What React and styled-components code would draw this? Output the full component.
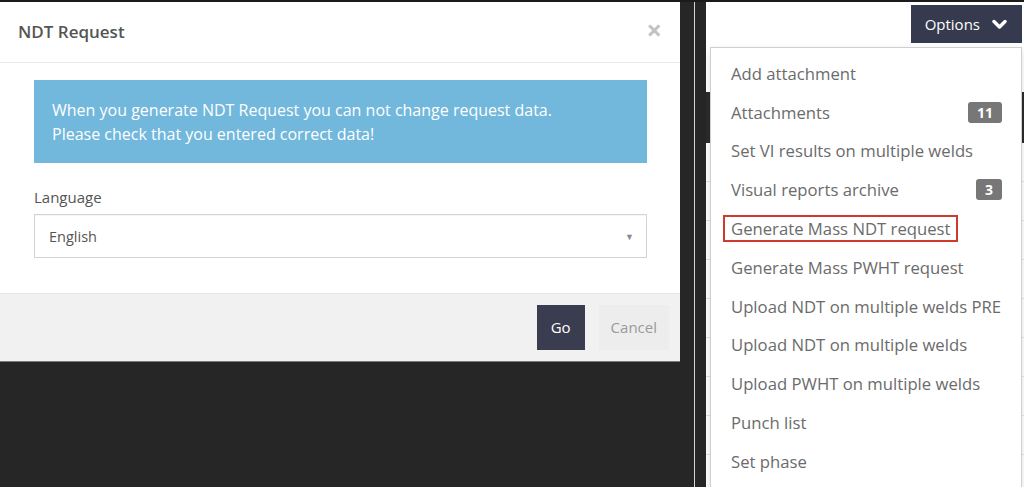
import React from "react";
import styled, { createGlobalStyle } from "styled-components";

const GlobalStyle = createGlobalStyle`
  html, body {
    margin: 0;
    padding: 0;
    background: #262626;
    font-family: "Open Sans", "Liberation Sans", sans-serif;
  }
  * { box-sizing: border-box; }
`;

const Screen = styled.div`
  display: flex;
  width: 1024px;
  height: 487px;
  overflow: hidden;
  border-top: 2px solid #1b1b1b;
  background: #262626;
`;

/* ---------- left shot: modal ---------- */

const LeftShot = styled.div`
  width: 680px;
  flex-shrink: 0;
`;

const Modal = styled.div`
  background: #fff;
  border-bottom: 1px solid #7a7a7a;
`;

const ModalHeader = styled.div`
  display: flex;
  align-items: center;
  justify-content: space-between;
  height: 61px;
  padding: 0 18px;
  border-bottom: 1px solid #e8e8e8;
`;

const Title = styled.h4`
  margin: 0;
  font-size: 17px;
  font-weight: 600;
  color: #555;
  padding-bottom: 1px;
`;

const Close = styled.span`
  font-size: 27px;
  font-weight: 700;
  line-height: 1;
  color: #c2c2c2;
  margin-top: -6px;
`;

const ModalBody = styled.div`
  padding: 17px 33px 35px 34px;
`;

const Alert = styled.div`
  background: #72b7dc;
  color: #fff;
  font-size: 16px;
  line-height: 24px;
  padding: 18px 18px 17px;
`;

const Label = styled.label`
  display: block;
  margin-top: 24px;
  font-size: 15px;
  line-height: 20px;
  color: #555;
`;

const Select = styled.div`
  display: flex;
  align-items: center;
  justify-content: space-between;
  margin-top: 7px;
  height: 44px;
  padding: 0 12px 0 14px;
  border: 1px solid #d3d3d3;
  box-shadow: inset 0 1px 1px rgba(0, 0, 0, 0.04);
  font-size: 14.5px;
  color: #555;
`;

const Caret = styled.span`
  font-size: 9px;
  color: #8a8a8a;
`;

const ModalFooter = styled.div`
  display: flex;
  justify-content: flex-end;
  align-items: center;
  gap: 14px;
  height: 68px;
  padding: 0 11px 1px 0;
  background: #f1f1f1;
  border-top: 1px solid #e6e6e6;
`;

const Button = styled.button`
  height: 45px;
  border: none;
  font-family: inherit;
  font-size: 15px;
  padding: 0 ${(p) => (p.$primary ? "14px" : "12px")};
  background: ${(p) => (p.$primary ? "#3a3c50" : "#ededed")};
  color: ${(p) => (p.$primary ? "#fff" : "#9a9a9a")};
  font-weight: ${(p) => (p.$primary ? 500 : 400)};
`;

/* ---------- divider between shots ---------- */

const Gutter = styled.div`
  width: 26px;
  flex-shrink: 0;
  display: flex;
  padding-left: 14px;
`;

const GutterLine = styled.div`
  width: 1px;
  background: #d6d6d6;
`;

/* ---------- right shot: options menu ---------- */

const RightShot = styled.div`
  position: relative;
  flex: 1;
  background: #fff;
`;

const TopRow = styled.div`
  display: flex;
  justify-content: flex-end;
  padding: 3px 2px 0 0;
`;

const OptionsButton = styled.button`
  display: flex;
  align-items: center;
  gap: 12px;
  height: 38px;
  padding: 0 15px 0 14px;
  border: none;
  background: #363a4e;
  color: #fff;
  font-family: inherit;
  font-size: 15px;
`;

const DarkBar = styled.div`
  margin-top: 49px;
  height: 51px;
  background: #2c2c2c;
`;

const TableRow = styled.div`
  height: 39px;
  border-bottom: 1px solid #e4e4e4;
`;

const Menu = styled.ul`
  position: absolute;
  top: 45px;
  left: 4px;
  width: 312px;
  height: 460px;
  margin: 0;
  padding: 6px 19px 0 20px;
  list-style: none;
  background: #fff;
  border: 1px solid #cfcfcf;
  box-shadow: 0 4px 10px rgba(0, 0, 0, 0.12);
`;

const MenuItem = styled.li`
  display: flex;
  align-items: center;
  justify-content: space-between;
  height: 38.8px;
  font-size: 16.7px;
  color: #6b6b6b;
  white-space: nowrap;
`;

const ItemText = styled.span`
  ${(p) =>
    p.$marked &&
    `
    display: inline-block;
    margin-left: -8px;
    padding: 0 6px;
    line-height: 23px;
    border: 2px solid #cf3a2f;
  `}
`;

const Badge = styled.span`
  display: inline-block;
  min-width: 25px;
  padding: 0 9px;
  height: 21px;
  line-height: 21px;
  border-radius: 3px;
  background: #777;
  color: #fff;
  font-size: 14px;
  font-weight: 700;
  text-align: center;
`;

const ChevronDown = () => (
  <svg width="15" height="11" viewBox="0 0 15 11">
    <path
      d="M2 2.5 L7.5 8 L13 2.5"
      fill="none"
      stroke="#fff"
      strokeWidth="3.4"
      strokeLinecap="round"
      strokeLinejoin="round"
    />
  </svg>
);

const menuItems = [
  { text: "Add attachment" },
  { text: "Attachments", badge: 11 },
  { text: "Set VI results on multiple welds" },
  { text: "Visual reports archive", badge: 3 },
  { text: "Generate Mass NDT request", marked: true },
  { text: "Generate Mass PWHT request" },
  { text: "Upload NDT on multiple welds PRE" },
  { text: "Upload NDT on multiple welds" },
  { text: "Upload PWHT on multiple welds" },
  { text: "Punch list" },
  { text: "Set phase" },
];

const App = () => {
  return (
    <>
      <GlobalStyle />
      <Screen>
        <LeftShot>
          <Modal>
            <ModalHeader>
              <Title>NDT Request</Title>
              <Close>×</Close>
            </ModalHeader>
            <ModalBody>
              <Alert>
                When you generate NDT Request you can not change request data.
                <br />
                Please check that you entered correct data!
              </Alert>
              <Label>Language</Label>
              <Select>
                <span>English</span>
                <Caret>▼</Caret>
              </Select>
            </ModalBody>
            <ModalFooter>
              <Button $primary>Go</Button>
              <Button>Cancel</Button>
            </ModalFooter>
          </Modal>
        </LeftShot>

        <Gutter>
          <GutterLine />
        </Gutter>

        <RightShot>
          <TopRow>
            <OptionsButton>
              Options
              <ChevronDown />
            </OptionsButton>
          </TopRow>
          <DarkBar />
          {[0, 1, 2, 3, 4, 5, 6, 7].map((i) => (
            <TableRow key={i} />
          ))}
          <Menu>
            {menuItems.map((item) => (
              <MenuItem key={item.text}>
                <ItemText $marked={item.marked}>{item.text}</ItemText>
                {item.badge && <Badge>{item.badge}</Badge>}
              </MenuItem>
            ))}
          </Menu>
        </RightShot>
      </Screen>
    </>
  );
};

export default App;
